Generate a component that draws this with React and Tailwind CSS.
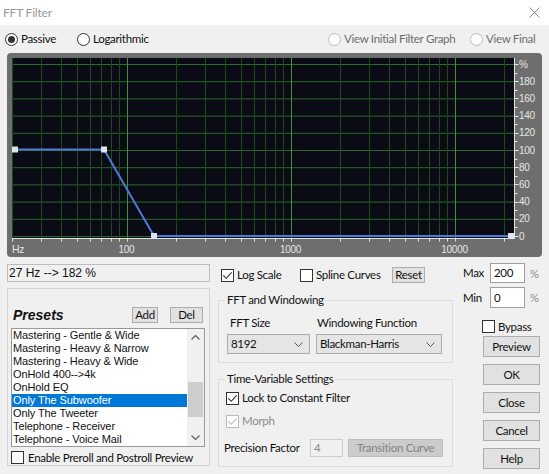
import React from "react";

const freqs = [];
for (let d = 10; d <= 10000; d *= 10) {
  for (let m = 1; m <= 9; m++) {
    const f = d * m;
    if (f >= 20 && f <= 20000) freqs.push(f);
  }
}
const fx = (f) => 126.5 + (Math.log10(f) - 2) * 164;
const py = (p) => 236 - p * 0.86;

function Graph() {
  const hLines = [];
  for (let p = 0; p <= 200; p += 20) hLines.push(p);
  const rTicks = [];
  for (let p = 0; p <= 200; p += 10) rTicks.push(p);
  const pts = [
    [15, 149.5],
    [104, 149.5],
    [154, 236],
    [511, 236],
  ];
  return (
    <svg width="535" height="204" viewBox="7 53 535 204" className="block">
      <rect x="12" y="58" width="502" height="180" fill="#0a0b14" />
      {hLines.map((p) => (
        <line key={"h" + p} x1="12" x2="514" y1={py(p) + 0.5} y2={py(p) + 0.5} stroke="#2a6a2a" strokeWidth="1" />
      ))}
      {freqs.map((f) => {
        const major = f === 100 || f === 1000 || f === 10000;
        const x = Math.round(fx(f)) + 0.5;
        return (
          <line key={"v" + f} x1={x} x2={x} y1="58" y2="238" stroke={major ? "#3f8f3f" : "#1d4a1d"} strokeWidth="1" />
        );
      })}
      <line x1="12" x2="514.5" y1="238.5" y2="238.5" stroke="#e6e6e6" strokeWidth="1" />
      <line x1="514.5" x2="514.5" y1="58" y2="238.5" stroke="#e6e6e6" strokeWidth="1" />
      {freqs.map((f) => {
        const x = Math.round(fx(f)) + 0.5;
        return <line key={"t" + f} x1={x} x2={x} y1="238.5" y2="241.5" stroke="#e6e6e6" strokeWidth="1" />;
      })}
      {rTicks.map((p) => (
        <line key={"r" + p} x1="514.5" x2={p % 20 === 0 ? 518.5 : 517.5} y1={Math.round(py(p)) + 0.5} y2={Math.round(py(p)) + 0.5} stroke="#e6e6e6" strokeWidth="1" />
      ))}
      {hLines.map((p) => (
        <text key={"l" + p} x="519" y={py(p) + 3.5} fill="#e6e6e6" fontSize="10" fontFamily="'Liberation Sans', Arial, sans-serif">
          {p === 200 ? "%" : p}
        </text>
      ))}
      <text x="12" y="253" fill="#e6e6e6" fontSize="10.5" fontFamily="'Liberation Sans', Arial, sans-serif">Hz</text>
      <text x="126.5" y="253" textAnchor="middle" fill="#e6e6e6" fontSize="10" fontFamily="'Liberation Sans', Arial, sans-serif">100</text>
      <text x="290.5" y="253" textAnchor="middle" fill="#e6e6e6" fontSize="10" fontFamily="'Liberation Sans', Arial, sans-serif">1000</text>
      <text x="454.5" y="253" textAnchor="middle" fill="#e6e6e6" fontSize="10" fontFamily="'Liberation Sans', Arial, sans-serif">10000</text>
      <polyline points={pts.map((p) => p.join(",")).join(" ")} fill="none" stroke="#4d7bd4" strokeWidth="2" />
      {pts.map((p, i) => (
        <rect key={"m" + i} x={p[0] - 3} y={p[1] - 3} width="6" height="6" fill="#dfe3ee" />
      ))}
    </svg>
  );
}

function Radio({ checked, disabled }) {
  return (
    <span
      className={
        disabled
          ? "w-[13px] h-[13px] rounded-full border border-[#bcbcbc] bg-white flex items-center justify-center shrink-0"
          : "w-[13px] h-[13px] rounded-full border border-[#333333] bg-white flex items-center justify-center shrink-0"
      }
    >
      {checked && <span className="w-[7px] h-[7px] rounded-full bg-[#333333]" />}
    </span>
  );
}

function Check({ checked, disabled }) {
  return (
    <span
      className={
        disabled
          ? "w-[13px] h-[13px] border border-[#bcbcbc] bg-white flex items-center justify-center shrink-0"
          : "w-[13px] h-[13px] border border-[#333333] bg-white flex items-center justify-center shrink-0"
      }
    >
      {checked && (
        <svg width="11" height="11" viewBox="0 0 11 11">
          <path d="M1.3 5.3 L4.2 8.3 L9.7 2.3" fill="none" stroke={disabled ? "#bcbcbc" : "#333333"} strokeWidth="1.1" />
        </svg>
      )}
    </span>
  );
}

function Btn({ children, className }) {
  return (
    <div className={"border border-[#adadad] bg-[#e1e1e1] flex items-center justify-center " + className}>{children}</div>
  );
}

function Chevron() {
  return (
    <svg width="9" height="5" viewBox="0 0 9 5">
      <polyline points="0.5,0.5 4.5,4.5 8.5,0.5" fill="none" stroke="#555555" strokeWidth="1" />
    </svg>
  );
}

const presets = [
  "Mastering - Gentle & Wide",
  "Mastering - Heavy & Narrow",
  "Mastering - Heavy & Wide",
  "OnHold 400-->4k",
  "OnHold EQ",
  "Only The Subwoofer",
  "Only The Tweeter",
  "Telephone - Receiver",
  "Telephone - Voice Mail",
];

export default function App() {
  return (
    <div className="w-[549px] h-[474px] bg-[#f0f0f0] overflow-hidden font-['Lato',sans-serif] text-[11.5px] tracking-[-0.3px] text-[#111111] leading-none whitespace-nowrap">
      {/* title bar */}
      <div className="h-[25px] bg-white flex items-center justify-between pl-[3px] pr-[9px]">
        <span className="text-[#999999] text-[12px] tracking-[-0.2px]">FFT Filter</span>
        <svg width="11" height="11" viewBox="0 0 11 11">
          <path d="M0.5 0.5 L10.5 10.5 M10.5 0.5 L0.5 10.5" stroke="#8a8a8a" strokeWidth="1" />
        </svg>
      </div>

      {/* radio row */}
      <div className="h-[28px] flex items-center pl-[5px]">
        <div className="w-[72px] flex items-center gap-[3px]">
          <Radio checked />
          <span>Passive</span>
        </div>
        <div className="w-[251px] flex items-center gap-[3px]">
          <Radio />
          <span>Logarithmic</span>
        </div>
        <div className="w-[142px] flex items-center gap-[3px] text-[#6d6d6d]">
          <Radio disabled />
          <span>View Initial Filter Graph</span>
        </div>
        <div className="flex items-center gap-[3px] text-[#6d6d6d]">
          <Radio disabled />
          <span>View Final</span>
        </div>
      </div>

      {/* graph */}
      <div className="ml-[7px] w-[535px] h-[204px] rounded-[4px] bg-[#6e6e6e] overflow-hidden">
        <Graph />
      </div>

      {/* bottom */}
      <div className="flex">
        {/* left column */}
        <div className="ml-[7px] w-[203px] flex flex-col">
          <div className="mt-[7px] h-[18px] border border-[#bdbdbd] flex items-center pl-[1px] font-['Liberation_Sans',Arial,sans-serif] text-[12px] tracking-normal">
            27 Hz --&gt; 182 %
          </div>
          <div className="mt-[6px] h-[178px] border border-[#d5d5d5] flex flex-col">
            <div className="mt-[18px] h-[16px] flex items-center pl-[5px]">
              <span className="w-[119px] font-['Liberation_Sans',Arial,sans-serif] font-bold italic text-[14px] tracking-normal">Presets</span>
              <Btn className="w-[26px] h-[16px]">Add</Btn>
              <Btn className="ml-[12px] w-[33px] h-[16px]">Del</Btn>
            </div>
            <div className="mt-[5px] ml-[3px] w-[194px] h-[119px] border border-[#9a9a9a] bg-white flex">
              <div className="flex-1 flex flex-col font-['Liberation_Sans',Arial,sans-serif] text-[11px] tracking-[-0.1px]">
                {presets.map((p) => (
                  <div
                    key={p}
                    className={
                      p === "Only The Subwoofer"
                        ? "h-[13px] leading-[13px] pl-[1px] bg-[#0078d7] text-white"
                        : "h-[13px] leading-[13px] pl-[1px]"
                    }
                  >
                    {p}
                  </div>
                ))}
              </div>
              <div className="w-[17px] bg-[#f0f0f0] flex flex-col items-center">
                <div className="h-[17px] flex items-center justify-center">
                  <svg width="9" height="5" viewBox="0 0 9 5">
                    <polyline points="0.5,4.5 4.5,0.5 8.5,4.5" fill="none" stroke="#606060" strokeWidth="1.2" />
                  </svg>
                </div>
                <div className="mt-[36px] w-[15px] h-[35px] bg-[#cdcdcd]" />
                <div className="mt-auto h-[17px] flex items-center justify-center">
                  <svg width="9" height="5" viewBox="0 0 9 5">
                    <polyline points="0.5,0.5 4.5,4.5 8.5,0.5" fill="none" stroke="#606060" strokeWidth="1.2" />
                  </svg>
                </div>
              </div>
            </div>
            <div className="mt-[4px] ml-[3px] h-[13px] flex items-center gap-[4px]">
              <Check />
              <span>Enable Preroll and Postroll Preview</span>
            </div>
          </div>
        </div>

        {/* middle column */}
        <div className="ml-[8px] w-[235px] flex flex-col">
          <div className="mt-[9px] h-[18px] flex items-center pl-[3px]">
            <div className="w-[79px] flex items-center gap-[3px]">
              <Check checked />
              <span>Log Scale</span>
            </div>
            <div className="w-[92px] flex items-center gap-[3px]">
              <Check />
              <span>Spline Curves</span>
            </div>
            <Btn className="w-[33px] h-[16px]">Reset</Btn>
          </div>

          <fieldset className="mt-[8px] h-[71px] border border-[#dcdcdc]">
            <legend className="ml-[6px] px-[2px] leading-[16px]">FFT and Windowing</legend>
            <div className="mt-[7px] h-[16px] flex items-center pl-[11px]">
              <span className="w-[87px]">FFT Size</span>
              <span>Windowing Function</span>
            </div>
            <div className="mt-[3px] flex pl-[8px]">
              <div className="w-[83px] h-[20px] border border-[#acacac] bg-[#e5e5e5] flex items-center justify-between pl-[3px] pr-[6px]">
                <span>8192</span>
                <Chevron />
              </div>
              <div className="ml-[6px] w-[126px] h-[20px] border border-[#acacac] bg-[#e5e5e5] flex items-center justify-between pl-[3px] pr-[6px]">
                <span>Blackman-Harris</span>
                <Chevron />
              </div>
            </div>
          </fieldset>

          <fieldset className="mt-[8px] h-[96px] border border-[#dcdcdc]">
            <legend className="ml-[6px] px-[2px] leading-[16px]">Time-Variable Settings</legend>
            <div className="mt-[4px] h-[14px] flex items-center gap-[3px] pl-[7px]">
              <Check checked />
              <span>Lock to Constant Filter</span>
            </div>
            <div className="mt-[9px] h-[14px] flex items-center gap-[3px] pl-[7px] text-[#8a8a8a]">
              <Check checked disabled />
              <span>Morph</span>
            </div>
            <div className="mt-[11px] h-[18px] flex items-center pl-[5px]">
              <span className="w-[86px]">Precision Factor</span>
              <div className="w-[33px] h-[18px] border border-[#cccccc] flex items-center pl-[3px] text-[#8a8a8a]">4</div>
              <div className="ml-[5px] w-[95px] h-[18px] border border-[#bfbfbf] bg-[#cccccc] flex items-center justify-center text-[#838383]">
                Transition Curve
              </div>
            </div>
          </fieldset>
        </div>

        {/* right column */}
        <div className="ml-[10px] w-[79px] flex flex-col">
          <div className="mt-[6px] h-[20px] flex items-center">
            <span className="w-[27px]">Max</span>
            <div className="w-[35px] h-[20px] border border-[#a0a0a0] bg-white flex items-center pl-[3px]">200</div>
            <span className="ml-[5px] text-[#888888] text-[11px]">%</span>
          </div>
          <div className="mt-[4px] h-[21px] flex items-center">
            <span className="w-[27px]">Min</span>
            <div className="w-[35px] h-[21px] border border-[#a0a0a0] bg-white flex items-center pl-[3px]">0</div>
            <span className="ml-[5px] text-[#888888] text-[11px]">%</span>
          </div>
          <div className="mt-[12px] ml-[19px] h-[13px] flex items-center gap-[3px]">
            <Check />
            <span>Bypass</span>
          </div>
          <Btn className="mt-[3px] ml-[20px] w-[57px] h-[21px]">Preview</Btn>
          <Btn className="mt-[7px] ml-[20px] w-[57px] h-[21px]">OK</Btn>
          <Btn className="mt-[7px] ml-[20px] w-[57px] h-[21px]">Close</Btn>
          <Btn className="mt-[7px] ml-[20px] w-[57px] h-[21px]">Cancel</Btn>
          <Btn className="mt-[7px] ml-[20px] w-[57px] h-[21px]">Help</Btn>
        </div>
      </div>
    </div>
  );
}
